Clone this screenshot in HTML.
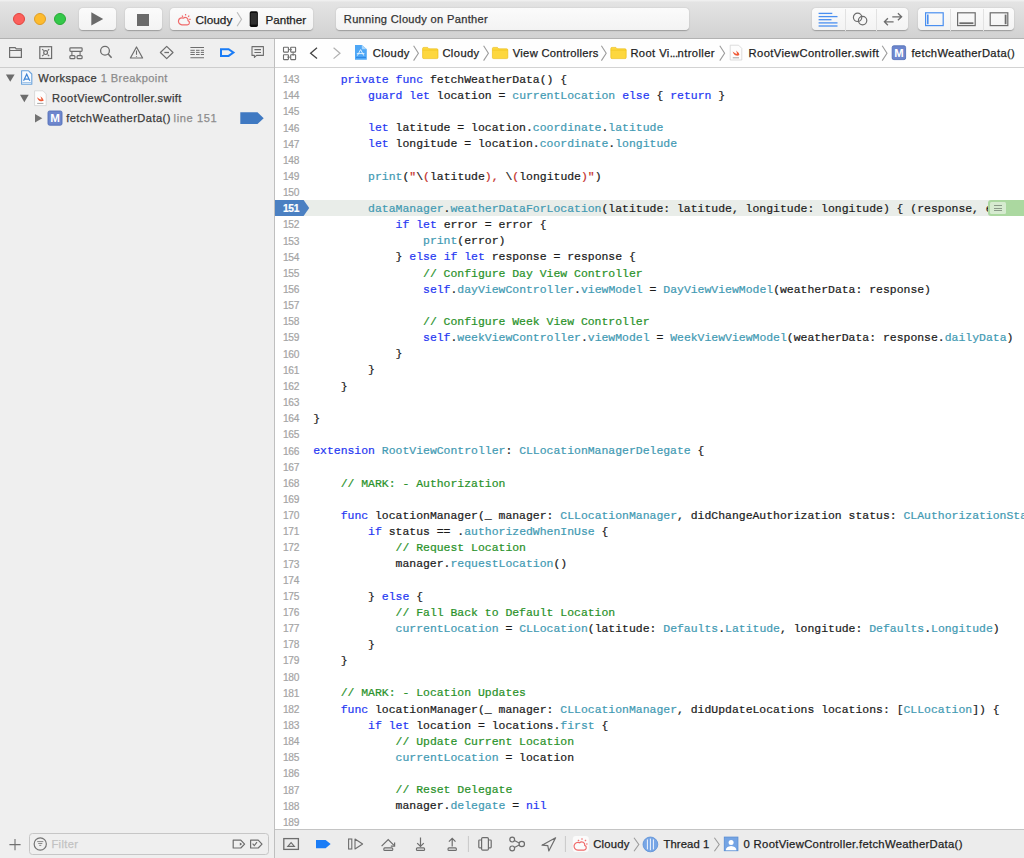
<!DOCTYPE html><html><head><meta charset="utf-8"><style>
*{box-sizing:border-box}
html,body{margin:0;padding:0}
body{width:1024px;height:858px;overflow:hidden;position:relative;background:#fff;font-family:"Liberation Sans",sans-serif;color:#222}
.abs{position:absolute}
#toolbar{position:absolute;left:0;top:0;width:1024px;height:39px;background:linear-gradient(#f1f1f1 0,#ededed 1px,#e4e4e4 2px,#d2d2d2 100%);border-bottom:1px solid #b2b2b2}
.tl{position:absolute;top:13.3px;width:12px;height:12px;border-radius:50%}
.btn{position:absolute;top:8.2px;height:21.9px;border-radius:4px;background:linear-gradient(#fbfbfb,#f3f3f3);box-shadow:0 0.5px 1.2px rgba(0,0,0,.28)}
.ui{-webkit-text-stroke:0.25px currentColor;position:absolute;white-space:pre;font-size:12px;line-height:14px}
#nav{position:absolute;left:0;top:39px;width:274px;height:819px;background:#efefef}
#navhdr{position:absolute;left:0;top:0;width:274px;height:29px;border-bottom:1px solid #cdcdcd}
#vdiv{position:absolute;left:274px;top:39px;width:1px;height:819px;background:#bfbfbf}
#jump{position:absolute;left:275px;top:39px;width:749px;height:29px;background:#fefefe;border-bottom:1px solid #d2d2d2}
#code{position:absolute;left:275px;top:68px;width:749px;height:761px;background:#fff;overflow:hidden}
.ln{-webkit-text-stroke:0.22px currentColor;position:absolute;left:38.20px;white-space:pre;font-family:"Liberation Mono",monospace;font-size:11.44px;line-height:16.145px;color:#1c1c1c}
.num{-webkit-text-stroke:0.2px currentColor;position:absolute;left:0;width:24px;margin-top:0.6px;text-align:right;white-space:pre;font-size:10.2px;line-height:16.145px;color:#a4a4a4;letter-spacing:-0.35px}
.k{color:#2638f2;-webkit-text-stroke:0.22px #2638f2}
.t{color:#429ab3;-webkit-text-stroke:0.22px #429ab3}
.c{color:#2a922a;-webkit-text-stroke:0.22px #2a922a}
.s{color:#c5302a;-webkit-text-stroke:0.22px #c5302a}
.bpnum{color:#fff;font-weight:bold}
#debug{position:absolute;left:275px;top:829px;width:749px;height:29px;background:#ececec;border-top:1px solid #c4c4c4}
</style></head><body>
<div id="toolbar">
  <div class="tl" style="left:13.3px;background:#fc605c;border:0.5px solid #e0443e"></div>
  <div class="tl" style="left:33.8px;background:#fdbb2e;border:0.5px solid #de9e26"></div>
  <div class="tl" style="left:53.8px;background:#34c84a;border:0.5px solid #27aa35"></div>
  <div class="btn" style="left:79px;width:37px"></div>
  <svg class="abs" style="left:91px;top:12.4px" width="13" height="14"><path d="M0.3 0.2 L12.2 6.9 L0.3 13.6 Z" fill="#6a6a6a"/></svg>
  <div class="btn" style="left:125px;width:36.5px"></div>
  <div class="abs" style="left:137px;top:13.6px;width:12px;height:12px;background:#6a6a6a"></div>
  <div class="btn" style="left:170.3px;width:142.5px"></div>
  <div class="btn" style="left:335.7px;width:353.5px"></div>
  <div class="btn" style="left:812px;width:96px"></div>
  <div class="abs" style="left:844.6px;top:8.5px;width:1px;height:22px;background:#e2e2e2"></div>
  <div class="abs" style="left:876.4px;top:8.5px;width:1px;height:22px;background:#e2e2e2"></div>
  <div class="btn" style="left:918px;width:96px"></div>
  <div class="abs" style="left:950.2px;top:8.5px;width:1px;height:22px;background:#e2e2e2"></div>
  <div class="abs" style="left:982.6px;top:8.5px;width:1px;height:22px;background:#e2e2e2"></div>
</div>
<div id="nav">
  <div id="navhdr"></div>
  <div class="abs" style="left:28.6px;top:794.2px;width:240.2px;height:21.4px;border:1px solid #c6c6c6;border-radius:3.5px;background:#efefef"></div>
</div>
<div id="vdiv"></div>
<div id="jump"></div>
<div id="code">
<div class="abs" style="left:28px;top:132px;width:721px;height:16px;background:#e9ede9"></div>
<svg class="abs" style="left:0;top:132px" width="36" height="16"><path d="M0 0 H28.6 L34.2 8 L28.6 16 H0 Z" fill="#4b80c2"/></svg>
<div class="num" style="top:3.58px">143</div><div class="num" style="top:19.73px">144</div><div class="num" style="top:35.87px">145</div><div class="num" style="top:52.02px">146</div><div class="num" style="top:68.16px">147</div><div class="num" style="top:84.31px">148</div><div class="num" style="top:100.45px">149</div><div class="num" style="top:116.60px">150</div><div class="num bpnum" style="top:132.74px">151</div><div class="num" style="top:148.89px">152</div><div class="num" style="top:165.03px">153</div><div class="num" style="top:181.18px">154</div><div class="num" style="top:197.32px">155</div><div class="num" style="top:213.47px">156</div><div class="num" style="top:229.61px">157</div><div class="num" style="top:245.76px">158</div><div class="num" style="top:261.90px">159</div><div class="num" style="top:278.05px">160</div><div class="num" style="top:294.19px">161</div><div class="num" style="top:310.34px">162</div><div class="num" style="top:326.48px">163</div><div class="num" style="top:342.63px">164</div><div class="num" style="top:358.77px">165</div><div class="num" style="top:374.92px">166</div><div class="num" style="top:391.06px">167</div><div class="num" style="top:407.21px">168</div><div class="num" style="top:423.35px">169</div><div class="num" style="top:439.50px">170</div><div class="num" style="top:455.64px">171</div><div class="num" style="top:471.79px">172</div><div class="num" style="top:487.93px">173</div><div class="num" style="top:504.08px">174</div><div class="num" style="top:520.22px">175</div><div class="num" style="top:536.37px">176</div><div class="num" style="top:552.51px">177</div><div class="num" style="top:568.66px">178</div><div class="num" style="top:584.80px">179</div><div class="num" style="top:600.95px">180</div><div class="num" style="top:617.09px">181</div><div class="num" style="top:633.24px">182</div><div class="num" style="top:649.38px">183</div><div class="num" style="top:665.53px">184</div><div class="num" style="top:681.67px">185</div><div class="num" style="top:697.82px">186</div><div class="num" style="top:713.96px">187</div><div class="num" style="top:730.11px">188</div><div class="num" style="top:746.25px">189</div>
<div class="ln" style="top:3.88px">    <span class="k">private</span> <span class="k">func</span> fetchWeatherData() {</div><div class="ln" style="top:20.03px">        <span class="k">guard</span> <span class="k">let</span> location = <span class="t">currentLocation</span> <span class="k">else</span> { <span class="k">return</span> }</div><div class="ln" style="top:36.17px"></div><div class="ln" style="top:52.32px">        <span class="k">let</span> latitude = location.<span class="t">coordinate</span>.<span class="t">latitude</span></div><div class="ln" style="top:68.46px">        <span class="k">let</span> longitude = location.<span class="t">coordinate</span>.<span class="t">longitude</span></div><div class="ln" style="top:84.61px"></div><div class="ln" style="top:100.75px">        <span class="t">print</span>(<span class="s">&quot;</span>\<span class="s">(</span>latitude<span class="s">), </span>\<span class="s">(</span>longitude<span class="s">)&quot;</span>)</div><div class="ln" style="top:116.90px"></div><div class="ln" style="top:133.04px">        <span class="t">dataManager</span>.<span class="t">weatherDataForLocation</span>(latitude: latitude, longitude: longitude) { (response, error) <span class="k">in</span></div><div class="ln" style="top:149.19px">            <span class="k">if</span> <span class="k">let</span> error = error {</div><div class="ln" style="top:165.33px">                <span class="t">print</span>(error)</div><div class="ln" style="top:181.48px">            } <span class="k">else</span> <span class="k">if</span> <span class="k">let</span> response = response {</div><div class="ln" style="top:197.62px">                <span class="c">// Configure Day View Controller</span></div><div class="ln" style="top:213.77px">                <span class="k">self</span>.<span class="t">dayViewController</span>.<span class="t">viewModel</span> = <span class="t">DayViewViewModel</span>(weatherData: response)</div><div class="ln" style="top:229.91px"></div><div class="ln" style="top:246.06px">                <span class="c">// Configure Week View Controller</span></div><div class="ln" style="top:262.20px">                <span class="k">self</span>.<span class="t">weekViewController</span>.<span class="t">viewModel</span> = <span class="t">WeekViewViewModel</span>(weatherData: response.<span class="t">dailyData</span>)</div><div class="ln" style="top:278.35px">            }</div><div class="ln" style="top:294.49px">        }</div><div class="ln" style="top:310.64px">    }</div><div class="ln" style="top:326.78px"></div><div class="ln" style="top:342.93px">}</div><div class="ln" style="top:359.07px"></div><div class="ln" style="top:375.22px"><span class="k">extension</span> <span class="t">RootViewController</span>: <span class="t">CLLocationManagerDelegate</span> {</div><div class="ln" style="top:391.36px"></div><div class="ln" style="top:407.51px">    <span class="c">// MARK: - Authorization</span></div><div class="ln" style="top:423.65px"></div><div class="ln" style="top:439.80px">    <span class="k">func</span> locationManager(_ manager: <span class="t">CLLocationManager</span>, didChangeAuthorization status: <span class="t">CLAuthorizationStatus</span>) {</div><div class="ln" style="top:455.94px">        <span class="k">if</span> status == .<span class="t">authorizedWhenInUse</span> {</div><div class="ln" style="top:472.09px">            <span class="c">// Request Location</span></div><div class="ln" style="top:488.23px">            manager.<span class="t">requestLocation</span>()</div><div class="ln" style="top:504.38px"></div><div class="ln" style="top:520.52px">        } <span class="k">else</span> {</div><div class="ln" style="top:536.67px">            <span class="c">// Fall Back to Default Location</span></div><div class="ln" style="top:552.81px">            <span class="t">currentLocation</span> = <span class="t">CLLocation</span>(latitude: <span class="t">Defaults</span>.<span class="t">Latitude</span>, longitude: <span class="t">Defaults</span>.<span class="t">Longitude</span>)</div><div class="ln" style="top:568.96px">        }</div><div class="ln" style="top:585.10px">    }</div><div class="ln" style="top:601.25px"></div><div class="ln" style="top:617.39px">    <span class="c">// MARK: - Location Updates</span></div><div class="ln" style="top:633.54px">    <span class="k">func</span> locationManager(_ manager: <span class="t">CLLocationManager</span>, didUpdateLocations locations: [<span class="t">CLLocation</span>]) {</div><div class="ln" style="top:649.68px">        <span class="k">if</span> <span class="k">let</span> location = locations.<span class="t">first</span> {</div><div class="ln" style="top:665.83px">            <span class="c">// Update Current Location</span></div><div class="ln" style="top:681.97px">            <span class="t">currentLocation</span> = location</div><div class="ln" style="top:698.12px"></div><div class="ln" style="top:714.26px">            <span class="c">// Reset Delegate</span></div><div class="ln" style="top:730.41px">            manager.<span class="t">delegate</span> = <span class="k">nil</span></div><div class="ln" style="top:746.55px"></div>
<div class="abs" style="left:712.8px;top:132px;width:40px;height:16px;background:#abd8a0;border-radius:3px 0 0 3px"></div>
<div class="abs" style="left:714.6px;top:133.6px;width:16.4px;height:12.4px;background:#d6ebd0;border-radius:1.5px"></div>
<div class="abs" style="left:719px;top:137.2px;width:8px;height:1px;background:#8a9a88"></div>
<div class="abs" style="left:719px;top:139.6px;width:8px;height:1px;background:#8a9a88"></div>
<div class="abs" style="left:719px;top:142px;width:8px;height:1px;background:#8a9a88"></div>
</div>
<div id="debug"></div>
<div class="ui" style="left:195.60px;top:10px;font-size:11.8px;line-height:20px;color:#1e1e1e;">Cloudy</div><div class="ui" style="left:265.50px;top:10px;font-size:11.6px;line-height:20px;color:#1e1e1e;">Panther</div><div class="ui" style="left:343.80px;top:9px;font-size:11.1px;line-height:20px;color:#333;letter-spacing:0.32px">Running Cloudy on Panther</div><div class="ui" style="left:38.30px;top:68px;font-size:11.1px;line-height:20px;color:#3a3a3a;letter-spacing:0.38px">Workspace</div><div class="ui" style="left:100.80px;top:68px;font-size:11.1px;line-height:20px;color:#8c8c8c;letter-spacing:0.38px">1 Breakpoint</div><div class="ui" style="left:52.10px;top:88px;font-size:11.1px;line-height:20px;color:#3a3a3a;letter-spacing:0.4px">RootViewController.swift</div><div class="ui" style="left:66.20px;top:108px;font-size:11.1px;line-height:20px;color:#3a3a3a;letter-spacing:0.45px">fetchWeatherData()</div><div class="ui" style="left:173.60px;top:108px;font-size:11.1px;line-height:20px;color:#8c8c8c;letter-spacing:0.62px">line 151</div><div class="ui" style="left:372.80px;top:43px;font-size:11.2px;line-height:20px;color:#1e1e1e;letter-spacing:0.33px">Cloudy</div><div class="ui" style="left:442.40px;top:43px;font-size:11.2px;line-height:20px;color:#1e1e1e;letter-spacing:0.4px">Cloudy</div><div class="ui" style="left:512.80px;top:43px;font-size:11.2px;line-height:20px;color:#1e1e1e;letter-spacing:0.29px">View Controllers</div><div class="ui" style="left:630.40px;top:43px;font-size:11.2px;line-height:20px;color:#1e1e1e;letter-spacing:0.4px">Root Vi<span style="letter-spacing:-0.5px">...</span>ntroller</div><div class="ui" style="left:748.60px;top:43px;font-size:11.2px;line-height:20px;color:#1e1e1e;letter-spacing:0.4px">RootViewController.swift</div><div class="ui" style="left:911.40px;top:43px;font-size:11.2px;line-height:20px;color:#1e1e1e;letter-spacing:0.35px">fetchWeatherData()</div><div class="ui" style="left:593.20px;top:834px;font-size:11.3px;line-height:20px;color:#1e1e1e;letter-spacing:0.22px">Cloudy</div><div class="ui" style="left:663.40px;top:834px;font-size:11.3px;line-height:20px;color:#1e1e1e;letter-spacing:0.1px">Thread 1</div><div class="ui" style="left:743.60px;top:834px;font-size:11.3px;line-height:20px;color:#1e1e1e;letter-spacing:0.3px">0 RootViewController.fetchWeatherData()</div><div class="ui" style="left:51.40px;top:834px;font-size:11.1px;line-height:20px;color:#c2c2c2;letter-spacing:0.4px">Filter</div>
<svg class="abs" style="left:0;top:0;pointer-events:none" width="1024" height="858"><path d="M818.6 13.4 H832.3" stroke="#4a8ff0" stroke-width="1.3" fill="none" /><path d="M818.6 16.6 H837.5" stroke="#4a8ff0" stroke-width="1.3" fill="none" /><path d="M818.6 19.7 H831.5" stroke="#4a8ff0" stroke-width="1.3" fill="none" /><path d="M818.6 22.9 H837.5" stroke="#4a8ff0" stroke-width="1.3" fill="none" /><path d="M818.6 26.0 H837.5" stroke="#4a8ff0" stroke-width="1.3" fill="none" /><circle cx="857.6" cy="17.3" r="4.2" stroke="#6d6d6d" stroke-width="1.2" fill="none"/><circle cx="862.6" cy="20.6" r="4.2" stroke="#6d6d6d" stroke-width="1.2" fill="none"/><path d="M892.3 16.8 H901.6 M897.9 13.3 L901.6 16.8 L897.9 20.3" stroke="#6d6d6d" stroke-width="1.3" fill="none" /><path d="M884.4 21.8 H893.6 M887.9 18.3 L884.4 21.8 L887.9 25.3" stroke="#6d6d6d" stroke-width="1.3" fill="none" /><rect x="925.6" y="12.8" width="17.6" height="12.8" rx="0" stroke="#4a8ff0" stroke-width="1.2" fill="none"/><path d="M927.8 14.6 V24.2" stroke="#4a8ff0" stroke-width="1.6" fill="none" /><rect x="957.6" y="12.8" width="17.6" height="12.8" rx="0" stroke="#6d6d6d" stroke-width="1.2" fill="none"/><path d="M959.4 23.2 H973.4" stroke="#6d6d6d" stroke-width="1.8" fill="none" /><rect x="990.2" y="12.8" width="17.6" height="12.8" rx="0" stroke="#6d6d6d" stroke-width="1.2" fill="none"/><path d="M1005.6 14.6 V24.2" stroke="#6d6d6d" stroke-width="1.8" fill="none" /><path d="M181.90 24.80 H187.33 A2.17 2.17 0 0 0 188.03 20.60 A2.73 2.73 0 0 0 183.47 18.15 A3.50 3.50 0 1 0 181.90 24.80 Z" stroke="#f06a6a" stroke-width="1.2" fill="none" /><path d="M185.58 14.06 v1.47 M181.90 15.63 l1.12 1.12 M189.25 15.63 l-1.12 1.12 M190.65 19.31 h-1.47" stroke="#f06a6a" stroke-width="1.2" fill="none" /><path d="M237.1 12.3 L241.5 19.3 L237.1 26.3" stroke="#bdbdbd" stroke-width="1.2" fill="none" /><rect x="249.7" y="11.3" width="8.2" height="15.6" rx="1.6" stroke="none" stroke-width="0" fill="#0d0d0d"/><rect x="250.7" y="13.0" width="6.2" height="11.6" rx="0" stroke="none" stroke-width="0" fill="#2f2f2f"/><path d="M9.6 57.4 V47.7 H15.2 L16.2 48.9 H21.4 V57.4 Z M9.6 50.5 H21.4" stroke="#6d6d6d" stroke-width="1.2" fill="none" /><rect x="39.8" y="46.7" width="11.8" height="11.8" rx="0" stroke="#6d6d6d" stroke-width="1.2" fill="none"/><circle cx="45.6" cy="52.6" r="1.9" stroke="#6d6d6d" stroke-width="1.2" fill="none"/><path d="M42.2 49.2 L43.7 50.7 M49.2 49.2 L47.7 50.7 M42.2 56.2 L43.7 54.7 M49.2 56.2 L47.7 54.7" stroke="#6d6d6d" stroke-width="1.1" fill="none" /><rect x="69.9" y="47.8" width="12.2" height="3.6" rx="0.8" stroke="#6d6d6d" stroke-width="1.2" fill="none"/><path d="M71.9 51.4 V55.4 M80.1 51.4 V55.4" stroke="#6d6d6d" stroke-width="1.1" fill="none" /><rect x="69.9" y="55.7" width="5.0" height="3.0" rx="0.9" stroke="#6d6d6d" stroke-width="1.2" fill="none"/><rect x="77.1" y="55.7" width="5.0" height="3.0" rx="0.9" stroke="#6d6d6d" stroke-width="1.2" fill="none"/><circle cx="105" cy="50.8" r="4.4" stroke="#6d6d6d" stroke-width="1.3" fill="none"/><path d="M108.2 54.1 L111.6 57.8" stroke="#6d6d6d" stroke-width="1.5" fill="none" /><path d="M136.5 47 L142.6 58 H130.4 Z" stroke="#6d6d6d" stroke-width="1.2" fill="none" stroke-linejoin="round"/><path d="M136.5 50.5 V54.8 M136.5 56.2 V57" stroke="#6d6d6d" stroke-width="1.1" fill="none" /><path d="M166.7 46.4 L173 52.5 L166.7 58.6 L160.4 52.5 Z" stroke="#6d6d6d" stroke-width="1.2" fill="none" stroke-linejoin="round"/><path d="M164.4 52.5 H169" stroke="#6d6d6d" stroke-width="1.3" fill="none" /><path d="M190.4 47.5 H204 M190.4 57.8 H204" stroke="#6d6d6d" stroke-width="1.1" fill="none" /><path d="M190.4 50.3 H194.8 M196 50.3 H199.6 M200.8 50.3 H204" stroke="#6d6d6d" stroke-width="1.0" fill="none" /><path d="M190.4 52.4 H194.8 M196 52.4 H199.6 M200.8 52.4 H204" stroke="#6d6d6d" stroke-width="1.0" fill="none" /><path d="M190.4 54.5 H194.8 M196 54.5 H199.6 M200.8 54.5 H204" stroke="#6d6d6d" stroke-width="1.0" fill="none" /><path d="M221 49.2 H228.6 L233.4 52.5 L228.6 55.9 H221 Z" stroke="#1a7cf6" stroke-width="2.0" fill="none" /><path d="M252 46.6 H263.4 V55.4 H256.5 L254.4 57.4 V55.4 H252 Z" stroke="#6d6d6d" stroke-width="1.1" fill="none" stroke-linejoin="round"/><path d="M254.4 49.6 H261 M254.4 52.5 H261" stroke="#6d6d6d" stroke-width="1.2" fill="none" /><path d="M5.9 74.4 H14.6 L10.25 81.8 Z" stroke="none" stroke-width="0" fill="#6c6c6c" /><path d="M20.0 94.8 H28.7 L24.35 102.2 Z" stroke="none" stroke-width="0" fill="#6c6c6c" /><path d="M35.0 113.9 V122.6 L42.3 118.25 Z" stroke="none" stroke-width="0" fill="#727272" /><path d="M21.6 70.8 H28.6 L31.8 74 V84.2 H21.6 Z" stroke="#6aa2dc" stroke-width="1.1" fill="#f7fbff" stroke-linejoin="round"/><path d="M23.6 80.8 L26.7 74.2 L29.8 80.8 M24.4 79.2 H29" stroke="#3f86d6" stroke-width="1.2" fill="none" /><path d="M22.4 82.6 H31" stroke="#8fb8e4" stroke-width="0.9" fill="none" /><path d="M34.6 90.8 H43.0 L46.2 94.0 V105.6 H34.6 Z" stroke="#cfcfcf" stroke-width="0.7" fill="#fdfdfd" /><path d="M37.0 97.2 Q39.800000000000004 99.39999999999999 41.5 99.7 Q41.2 97.8 40.4 96.2 Q43.2 98.0 43.8 100.6 Q42.8 101.39999999999999 40.800000000000004 101.2 Q38.4 101.0 37.0 97.2 Z" stroke="none" stroke-width="0" fill="#f05a36" /><path d="M37.2 103.39999999999999 H43.400000000000006" stroke="#9a9a9a" stroke-width="0.9" fill="none" /><path d="M730.2 45.2 H738.6 L741.8000000000001 48.400000000000006 V60.0 H730.2 Z" stroke="#cfcfcf" stroke-width="0.7" fill="#fdfdfd" /><path d="M732.6 51.6 Q735.4000000000001 53.800000000000004 737.1 54.1 Q736.8000000000001 52.2 736.0 50.6 Q738.8000000000001 52.400000000000006 739.4000000000001 55.0 Q738.4000000000001 55.800000000000004 736.4000000000001 55.6 Q734.0 55.400000000000006 732.6 51.6 Z" stroke="none" stroke-width="0" fill="#f05a36" /><path d="M732.8000000000001 57.800000000000004 H739.0" stroke="#9a9a9a" stroke-width="0.9" fill="none" /><rect x="48" y="111" width="14" height="14.2" rx="1.6" stroke="#5470b8" stroke-width="0.9" fill="#6d86cd"/><text x="55.0" y="122.076" text-anchor="middle" font-family="Liberation Sans" font-weight="bold" font-size="11.6" fill="#fff">M</text><rect x="892.2" y="45.8" width="13.4" height="13.8" rx="1.6" stroke="#5470b8" stroke-width="0.9" fill="#6d86cd"/><text x="898.9000000000001" y="56.564" text-anchor="middle" font-family="Liberation Sans" font-weight="bold" font-size="11.3" fill="#fff">M</text><path d="M240.3 112.3 H257.5 L263.7 118.15 L257.5 124 H240.3 Z" stroke="none" stroke-width="0" fill="#3f79c2" /><rect x="283.5" y="47.2" width="4.9" height="4.9" rx="0.5" stroke="#6d6d6d" stroke-width="1.1" fill="none"/><rect x="290.7" y="47.2" width="4.9" height="4.9" rx="0.5" stroke="#6d6d6d" stroke-width="1.1" fill="none"/><rect x="283.5" y="54.7" width="4.9" height="4.9" rx="0.5" stroke="#6d6d6d" stroke-width="1.1" fill="none"/><rect x="290.7" y="54.7" width="4.9" height="4.9" rx="0.5" stroke="#6d6d6d" stroke-width="1.1" fill="none"/><path d="M288.4 49.6 H290.4 M290.6 48.8 L291.6 49.65 L290.6 50.5" stroke="#6d6d6d" stroke-width="0.9" fill="none" /><path d="M293.15 52.1 V54.4 M292.3 54.2 L293.15 55.4 L294 54.2" stroke="#6d6d6d" stroke-width="0.9" fill="none" /><path d="M290.7 57.15 H288.6 M288.8 56.3 L287.6 57.15 L288.8 58" stroke="#6d6d6d" stroke-width="0.9" fill="none" /><path d="M317 47.8 L310.6 53.2 L317 58.6" stroke="#444" stroke-width="1.3" fill="none" /><path d="M333.6 47.8 L340 53.2 L333.6 58.6" stroke="#b0b0b0" stroke-width="1.2" fill="none" /><path d="M355 44.9 H361.8 L366.8 49.2 V59.7 H355 Z" stroke="none" stroke-width="0" fill="#4ea7f6" /><path d="M361.8 44.9 V49.2 H366.8 Z" stroke="none" stroke-width="0" fill="#a9d6fb" /><path d="M357.4 55.6 L360.6 49.6 L363.8 55.6 M356.8 53.6 H364.4" stroke="#dff1ff" stroke-width="1.0" fill="none" /><path d="M356 57.4 H366" stroke="#2a86e6" stroke-width="1.0" fill="none" /><path d="M413.6 45.8 L418.40000000000003 53.2 L413.6 60.6" stroke="#9c9c9c" stroke-width="1.1" fill="none" /><path d="M483.6 45.8 L488.40000000000003 53.2 L483.6 60.6" stroke="#9c9c9c" stroke-width="1.1" fill="none" /><path d="M601.4 45.8 L606.1999999999999 53.2 L601.4 60.6" stroke="#9c9c9c" stroke-width="1.1" fill="none" /><path d="M719.8 45.8 L724.5999999999999 53.2 L719.8 60.6" stroke="#9c9c9c" stroke-width="1.1" fill="none" /><path d="M882.2 45.8 L887.0 53.2 L882.2 60.6" stroke="#9c9c9c" stroke-width="1.1" fill="none" /><path d="M422.6 48.6 Q422.6 47.4 423.8 47.4 H427.6 L429.0 48.8 H436.8 Q438.0 48.8 438.0 50.0 V57.4 Q438.0 58.599999999999994 436.8 58.599999999999994 H423.8 Q422.6 58.599999999999994 422.6 57.4 Z" stroke="#e9b80e" stroke-width="0.6" fill="#fdd73e" /><path d="M422.6 50.199999999999996 H438.0" stroke="#f0c21c" stroke-width="0.6" fill="none" /><path d="M492.4 48.6 Q492.4 47.4 493.59999999999997 47.4 H497.4 L498.79999999999995 48.8 H506.59999999999997 Q507.79999999999995 48.8 507.79999999999995 50.0 V57.4 Q507.79999999999995 58.599999999999994 506.59999999999997 58.599999999999994 H493.59999999999997 Q492.4 58.599999999999994 492.4 57.4 Z" stroke="#e9b80e" stroke-width="0.6" fill="#fdd73e" /><path d="M492.4 50.199999999999996 H507.79999999999995" stroke="#f0c21c" stroke-width="0.6" fill="none" /><path d="M610.8 48.6 Q610.8 47.4 612.0 47.4 H615.8 L617.1999999999999 48.8 H625.0 Q626.1999999999999 48.8 626.1999999999999 50.0 V57.4 Q626.1999999999999 58.599999999999994 625.0 58.599999999999994 H612.0 Q610.8 58.599999999999994 610.8 57.4 Z" stroke="#e9b80e" stroke-width="0.6" fill="#fdd73e" /><path d="M610.8 50.199999999999996 H626.1999999999999" stroke="#f0c21c" stroke-width="0.6" fill="none" /><rect x="283.8" y="838.6" width="14.6" height="10.8" rx="0" stroke="#6d6d6d" stroke-width="1.3" fill="none"/><path d="M287.8 846.4 L291.1 842.6 L294.4 846.4 Z" stroke="#6d6d6d" stroke-width="1.1" fill="none" /><path d="M316 840 H325.6 L330.6 844.1 L325.6 848.2 H316 Z" stroke="none" stroke-width="0" fill="#1a7cf6" /><rect x="348.6" y="839" width="3.2" height="10" rx="0" stroke="#6d6d6d" stroke-width="1.1" fill="none"/><path d="M355 839 L362.6 844 L355 849 Z" stroke="#6d6d6d" stroke-width="1.1" fill="none" stroke-linejoin="round"/><path d="M381.6 846.2 L388.2 839.6 L394 845.4" stroke="#6d6d6d" stroke-width="1.2" fill="none" /><path d="M394.6 842.4 V846.2 H390.8" stroke="#6d6d6d" stroke-width="1.2" fill="none" /><rect x="383.8" y="847.9" width="9" height="2.5" rx="1" stroke="#6d6d6d" stroke-width="1.1" fill="none"/><path d="M420.5 837.4 V846.4 M417.2 843.2 L420.5 846.5 L423.8 843.2" stroke="#6d6d6d" stroke-width="1.2" fill="none" /><rect x="416.4" y="847.9" width="8.2" height="2.5" rx="1" stroke="#6d6d6d" stroke-width="1.1" fill="none"/><path d="M452.2 846.6 V838.4 M448.9 841.6 L452.2 838.3 L455.5 841.6" stroke="#6d6d6d" stroke-width="1.2" fill="none" /><rect x="448" y="847.9" width="8.4" height="2.5" rx="1" stroke="#6d6d6d" stroke-width="1.1" fill="none"/><path d="M468.4 836 V852" stroke="#c9c9c9" stroke-width="1.0" fill="none" /><rect x="481.6" y="837.6" width="6.8" height="12.6" rx="1.2" stroke="#6d6d6d" stroke-width="1.2" fill="none"/><path d="M481.6 840 H479.6 Q478.8 840 478.8 840.8 V847 Q478.8 847.8 479.6 847.8 H481.6 M488.4 840 H490.4 Q491.2 840 491.2 840.8 V847 Q491.2 847.8 490.4 847.8 H488.4" stroke="#6d6d6d" stroke-width="1.2" fill="none" /><circle cx="512.2" cy="839.6" r="2.4" stroke="#6d6d6d" stroke-width="1.2" fill="none"/><circle cx="512.2" cy="848.4" r="2.4" stroke="#6d6d6d" stroke-width="1.2" fill="none"/><circle cx="521.8" cy="844" r="2.7" stroke="#6d6d6d" stroke-width="1.2" fill="none"/><path d="M514.4 840.6 L519.2 843 M514.4 847.4 L519.2 845" stroke="#6d6d6d" stroke-width="1.1" fill="none" /><path d="M555.6 837.8 L542 845.2 L547.8 845.6 L548.8 851 Z" stroke="#6d6d6d" stroke-width="1.2" fill="none" stroke-linejoin="round"/><path d="M565.4 836 V852" stroke="#c9c9c9" stroke-width="1.0" fill="none" /><rect x="572.8" y="836" width="16" height="16" rx="3" stroke="none" stroke-width="0" fill="#fbfbfb"/><path d="M577.90 850.10 H583.94 A2.42 2.42 0 0 0 584.73 845.42 A3.04 3.04 0 0 0 579.65 842.69 A3.90 3.90 0 1 0 577.90 850.10 Z" stroke="#f06a6a" stroke-width="1.2" fill="none" /><path d="M582.00 838.13 v1.64 M577.90 839.88 l1.25 1.25 M586.09 839.88 l-1.25 1.25 M587.65 843.98 h-1.64" stroke="#f06a6a" stroke-width="1.2" fill="none" /><path d="M634 837.8 L638.8 844.5 L634 851.2" stroke="#9c9c9c" stroke-width="1.1" fill="none" /><path d="M714.4 837.8 L719.1999999999999 844.5 L714.4 851.2" stroke="#9c9c9c" stroke-width="1.1" fill="none" /><circle cx="650.4" cy="844.4" r="7.4" stroke="#5c8fd6" stroke-width="0.8" fill="#77a6e6"/><path d="M647.4 839.4 V849.4 M650.4 838.6 V850.2 M653.4 839.4 V849.4" stroke="#fff" stroke-width="0.9" fill="none" /><rect x="724.3" y="837.1" width="13.6" height="13.6" rx="0" stroke="#5b8fd4" stroke-width="0.9" fill="#74a4e4"/><circle cx="731.1" cy="842.6" r="2.5" stroke="none" stroke-width="0" fill="#fff"/><path d="M725.8 850.2 Q726 846.2 731.1 845.9 Q736.2 846.2 736.4 850.2 Z" stroke="none" stroke-width="0" fill="#fff" /><circle cx="40.25" cy="844.0" r="6.1" stroke="#747474" stroke-width="1.2" fill="none"/><path d="M37.2 841.6 H43.3 M38.2 843.5 H42.3 M39.2 845.4 H41.3" stroke="#8a8a8a" stroke-width="1.0" fill="none" /><path d="M233.2 840.2 H240.8 L244.6 844.1 L240.8 848 H233.2 Z" stroke="#6d6d6d" stroke-width="1.2" fill="none" stroke-linejoin="round"/><path d="M239.8 842.4 L242.2 844.1 L239.8 845.8 Z" stroke="none" stroke-width="0" fill="#6d6d6d" /><path d="M250.6 840.2 H258.2 L262 844.1 L258.2 848 H250.6 Z" stroke="#6d6d6d" stroke-width="1.2" fill="none" stroke-linejoin="round"/><path d="M252.6 843.6 L254.3 845.6 L257 842.2" stroke="#6d6d6d" stroke-width="1.1" fill="none" /><path d="M9.4 844.6 H20.6 M15 839 V850.2" stroke="#707070" stroke-width="1.1" fill="none" /></svg>
</body></html>
